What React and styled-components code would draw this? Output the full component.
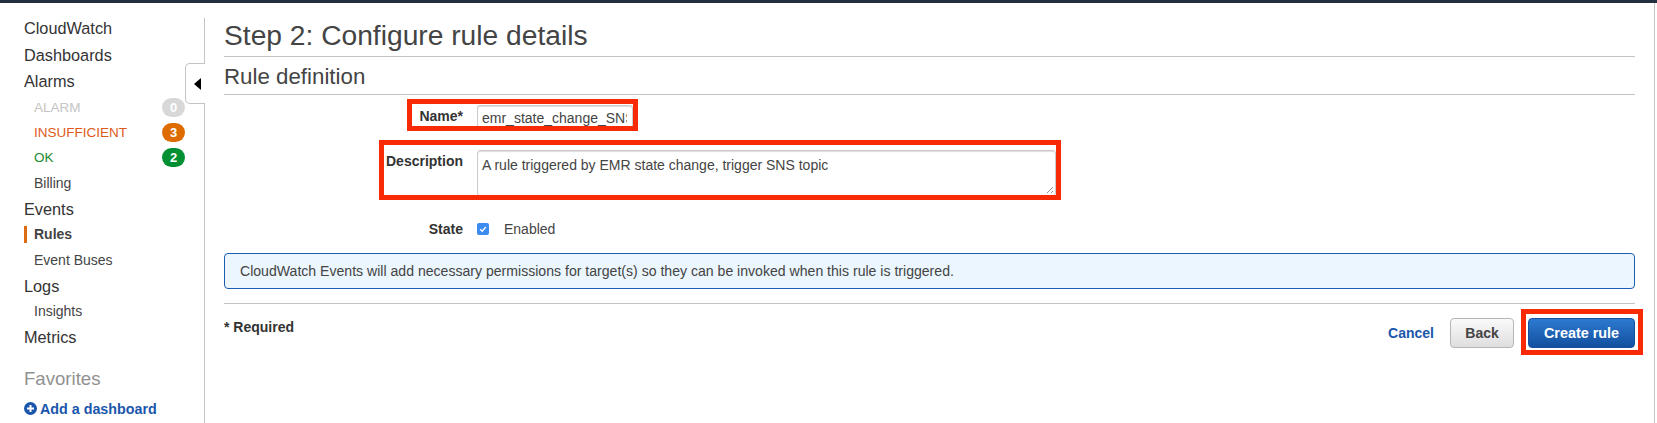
import React from 'react';
import styled, { createGlobalStyle } from 'styled-components';

const GlobalStyle = createGlobalStyle`
	html, body {
		margin: 0;
		padding: 0;
		background: #fff;
		overflow: hidden;
	}
	body {
		font-family: "Liberation Sans", Arial, sans-serif;
		color: #444;
	}
`;

const Page = styled.div`
	height: 423px;
	width: 1657px;
	box-sizing: border-box;
	border-top: 3px solid #232f3e;
	display: flex;
	overflow: hidden;
`;

const Sidebar = styled.nav`
	position: relative;
	width: 205px;
	flex: none;
	box-sizing: border-box;
	padding: 12px 0 0 24px;
	display: flex;
	flex-direction: column;
	&::after {
		content: '';
		position: absolute;
		right: 0;
		top: 15px;
		bottom: 0;
		width: 1px;
		background: #c4c4c4;
	}
`;

const TopItem = styled.div`
	height: 26.7px;
	line-height: 26px;
	font-size: 16.3px;
	color: #333;
`;

const SubItem = styled.div`
	position: relative;
	height: 25.15px;
	line-height: 25px;
	font-size: ${(p) => (p.$caps ? 13.5 : 14)}px;
	padding-left: 10px;
	padding-right: 20px;
	display: flex;
	justify-content: space-between;
	align-items: center;
	color: ${(p) => p.$color || '#444'};
	font-weight: ${(p) => (p.$active ? 700 : 400)};
	${(p) =>
		p.$active &&
		`&::before {
			content: '';
			position: absolute;
			left: 0;
			top: 4px;
			width: 3px;
			height: 17px;
			background: #dd6b10;
		}`}
`;

const Badge = styled.span`
	width: 23px;
	height: 19px;
	border-radius: 10px;
	background: ${(p) => p.$bg};
	color: #fff;
	font-size: 13px;
	font-weight: 700;
	line-height: 19px;
	text-align: center;
`;

const FavHeading = styled.div`
	margin-top: 15px;
	height: 26px;
	line-height: 26px;
	font-size: 18.6px;
	color: #919191;
`;

const AddLink = styled.a`
	margin-top: 9px;
	display: flex;
	align-items: center;
	gap: 3px;
	font-size: 14.3px;
	font-weight: 700;
	color: #1a56ac;
	svg {
		margin-top: -1px;
	}
`;

const CollapseHandle = styled.div`
	position: absolute;
	right: 0;
	top: 60px;
	width: 20px;
	height: 41px;
	box-sizing: border-box;
	background: #fff;
	border: 1px solid #c4c4c4;
	border-right: none;
	border-radius: 5px 0 0 5px;
	z-index: 1;
	display: flex;
	align-items: center;
	justify-content: center;
	&::before {
		content: '';
		border-style: solid;
		border-width: 6px 7px 6px 0;
		border-color: transparent #000 transparent transparent;
		margin-left: 3px;
	}
`;

const Main = styled.main`
	width: 1411px;
	margin-left: 19px;
	flex: none;
	display: flex;
	flex-direction: column;
`;

const Title = styled.h1`
	margin: 0;
	height: 54px;
	box-sizing: border-box;
	border-bottom: 1px solid #c4c4c4;
	padding-top: 14px;
	font-size: 28.2px;
	line-height: 36px;
	font-weight: 400;
	color: #444;
`;

const SectionTitle = styled.h2`
	margin: 0;
	height: 38px;
	box-sizing: border-box;
	border-bottom: 1px solid #c4c4c4;
	padding-top: 1px;
	font-size: 22.3px;
	line-height: 38px;
	font-weight: 400;
	color: #444;
`;

const FormRow = styled.div`
	position: relative;
	display: flex;
	align-items: flex-start;
	gap: 14px;
	box-sizing: border-box;
	padding-top: ${(p) => p.$pad || 0}px;
	height: ${(p) => p.$height}px;
`;

const Label = styled.label`
	width: 239px;
	text-align: right;
	font-size: 14px;
	font-weight: 700;
	color: #333;
	line-height: 16px;
	padding-top: ${(p) => p.$top || 0}px;
`;

const TextInput = styled.div`
	width: 156px;
	height: 26px;
	box-sizing: border-box;
	border: 1px solid #ccc;
	border-bottom: none;
	border-radius: 3px 3px 0 0;
	box-shadow: inset 0 1px 1px #ddd;
	padding: 3px 5px 0 4px;
	font-size: 14px;
	line-height: 18px;
	color: #444;
`;

const InputValue = styled.div`
	white-space: nowrap;
	overflow: hidden;
`;

const TextArea = styled.div`
	position: relative;
	width: 579px;
	height: 46px;
	box-sizing: border-box;
	border: 1px solid #ccc;
	border-radius: 3px;
	box-shadow: inset 0 1px 1px #ddd;
	padding: 5px 4px;
	font-size: 14px;
	line-height: 18px;
	color: #444;
	svg {
		position: absolute;
		right: 1px;
		bottom: 1px;
	}
`;

const Highlight = styled.div`
	position: absolute;
	box-sizing: border-box;
	border: 5px solid #f72a05;
	pointer-events: none;
	left: ${(p) => p.$left}px;
	top: ${(p) => p.$top}px;
	width: ${(p) => p.$width}px;
	height: ${(p) => p.$height}px;
`;

const Check = styled.span`
	width: 12px;
	height: 12px;
	margin-top: 2px;
	border-radius: 2px;
	background: #3b8bf2;
	display: flex;
	align-items: center;
	justify-content: center;
`;

const CheckText = styled.span`
	margin-left: 1px;
	font-size: 14px;
	line-height: 16px;
	color: #444;
`;

const InfoBox = styled.div`
	height: 36px;
	box-sizing: border-box;
	border: 1px solid #1a5eb0;
	border-radius: 4px;
	background: #ebf6fe;
	padding-left: 15px;
	font-size: 14.08px;
	line-height: 34px;
	color: #444;
`;

const Divider = styled.hr`
	margin: 14px 0 0;
	border: none;
	height: 1px;
	background: #c4c4c4;
`;

const Footer = styled.div`
	display: flex;
	justify-content: space-between;
	align-items: flex-start;
	padding-top: 14px;
`;

const RequiredNote = styled.div`
	font-size: 14px;
	font-weight: 700;
	color: #333;
	line-height: 18px;
`;

const Actions = styled.div`
	position: relative;
	display: flex;
	align-items: center;
	gap: 14px;
`;

const CancelLink = styled.a`
	font-size: 14px;
	font-weight: 700;
	color: #1a56ac;
	margin-right: 2px;
`;

const Button = styled.button`
	height: 30px;
	width: ${(p) => p.$width}px;
	padding: 0;
	box-sizing: border-box;
	border-radius: 4px;
	font-family: inherit;
	font-size: ${(p) => (p.$primary ? 14.4 : 14)}px;
	font-weight: 700;
	border: 1px solid ${(p) => (p.$primary ? '#15509f' : '#b5b5b5')};
	color: ${(p) => (p.$primary ? '#fff' : '#444')};
	background: ${(p) =>
		p.$primary
			? 'linear-gradient(#2d7ad0, #12509f)'
			: 'linear-gradient(#fafafa, #dedede)'};
`;

const EdgeLine = styled.div`
	margin-left: 19px;
	width: 1px;
	background: #c4c4c4;
	flex: none;
`;

export default function App() {
	return (
		<>
			<GlobalStyle />
			<Page>
				<Sidebar>
					<TopItem>CloudWatch</TopItem>
					<TopItem>Dashboards</TopItem>
					<TopItem>Alarms</TopItem>
					<SubItem $caps $color="#c4c4c4">
						ALARM <Badge $bg="#d8d8d8">0</Badge>
					</SubItem>
					<SubItem $caps $color="#dd5a1a">
						INSUFFICIENT <Badge $bg="#dd6b00">3</Badge>
					</SubItem>
					<SubItem $caps $color="#1d8a2e">
						OK <Badge $bg="#008f32">2</Badge>
					</SubItem>
					<SubItem>Billing</SubItem>
					<TopItem>Events</TopItem>
					<SubItem $active>Rules</SubItem>
					<SubItem>Event Buses</SubItem>
					<TopItem>Logs</TopItem>
					<SubItem>Insights</SubItem>
					<TopItem>Metrics</TopItem>
					<FavHeading>Favorites</FavHeading>
					<AddLink>
						<svg width="13" height="13" viewBox="0 0 13 13">
							<circle cx="6.5" cy="6.5" r="6.5" fill="#1a56ac" />
							<path d="M6.5 3v7M3 6.5h7" stroke="#fff" strokeWidth="2" />
						</svg>
						Add a dashboard
					</AddLink>
					<CollapseHandle />
				</Sidebar>
				<Main>
					<Title>Step 2: Configure rule details</Title>
					<SectionTitle>Rule definition</SectionTitle>
					<FormRow $height={55} $pad={10}>
						<Label $top={3}>Name*</Label>
						<TextInput>
							<InputValue>emr_state_change_SNS</InputValue>
						</TextInput>
						<Highlight $left={183} $top={4} $width={231} $height={32} />
					</FormRow>
					<FormRow $height={64}>
						<Label $top={2.5}>Description</Label>
						<TextArea>
							A rule triggered by EMR state change, trigger SNS topic
							<svg width="8" height="8" viewBox="0 0 8 8">
								<path d="M1 7l6-6M5 7l2-2" stroke="#777" strokeWidth="0.8" />
							</svg>
						</TextArea>
						<Highlight $left={155} $top={-10} $width={682} $height={60} />
					</FormRow>
					<FormRow $height={39} $pad={7}>
						<Label>State</Label>
						<Check>
							<svg width="8" height="8" viewBox="0 0 8 8">
								<path d="M1.2 4.2l2 2 3.6-4.2" stroke="#fff" strokeWidth="1.3" fill="none" />
							</svg>
						</Check>
						<CheckText>Enabled</CheckText>
					</FormRow>
					<InfoBox>
						CloudWatch Events will add necessary permissions for target(s) so they can be invoked
						when this rule is triggered.
					</InfoBox>
					<Divider />
					<Footer>
						<RequiredNote>* Required</RequiredNote>
						<Actions>
							<CancelLink>Cancel</CancelLink>
							<Button $width={64}>Back</Button>
							<Button $primary $width={107}>
								Create rule
							</Button>
							<Highlight $left={133} $top={-9} $width={122} $height={46} />
						</Actions>
					</Footer>
				</Main>
				<EdgeLine />
			</Page>
		</>
	);
}
